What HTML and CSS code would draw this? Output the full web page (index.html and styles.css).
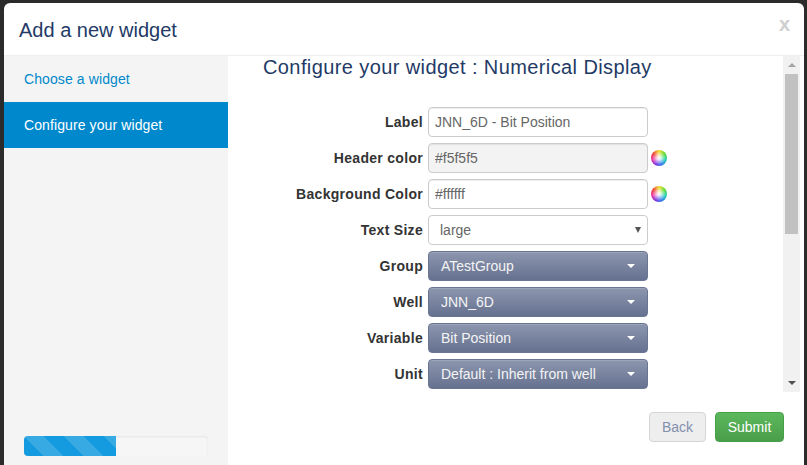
FILE: index.html
```html
<!DOCTYPE html>
<html lang="en">
<head>
<meta charset="utf-8">
<title>Add a new widget</title>
<link rel="stylesheet" href="styles.css">
</head>
<body>
<div class="modal">
  <header class="modal-header">
    <h3>Add a new widget</h3>
    <span class="close">x</span>
  </header>
  <div class="modal-body">
    <aside class="sidebar">
      <nav class="steps">
        <a class="step">Choose a widget</a>
        <a class="step active">Configure your widget</a>
      </nav>
      <div class="progress"><div class="bar"></div></div>
    </aside>
    <main class="content">
      <div class="scroll-row">
        <div class="scroll-pane">
          <h4>Configure your widget : Numerical Display</h4>
          <form class="form">
            <div class="row"><label>Label</label><input class="field" type="text" value="JNN_6D - Bit Position"></div>
            <div class="row"><label>Header color</label><input class="field tinted" type="text" value="#f5f5f5"><span class="wheel"></span></div>
            <div class="row"><label>Background Color</label><input class="field" type="text" value="#ffffff"><span class="wheel"></span></div>
            <div class="row"><label>Text Size</label><div class="field select"><span>large</span><i class="select-arrow"></i></div></div>
            <div class="row"><label>Group</label><div class="dropdown"><span>ATestGroup</span><i class="caret"></i></div></div>
            <div class="row"><label>Well</label><div class="dropdown"><span>JNN_6D</span><i class="caret"></i></div></div>
            <div class="row"><label>Variable</label><div class="dropdown"><span>Bit Position</span><i class="caret"></i></div></div>
            <div class="row"><label>Unit</label><div class="dropdown"><span>Default : Inherit from well</span><i class="caret"></i></div></div>
          </form>
        </div>
        <div class="scrollbar">
          <i class="arrow-up"></i>
          <div class="track"><div class="thumb"></div></div>
          <i class="arrow-down"></i>
        </div>
      </div>
      <footer class="actions">
        <button class="btn back" type="button">Back</button>
        <button class="btn submit" type="button">Submit</button>
      </footer>
    </main>
  </div>
</div>
</body>
</html>
```
FILE: styles.css
```css
* { box-sizing: border-box; }
html, body { margin: 0; height: 100%; overflow: hidden; }
body {
  background: #2b2b2b;
  padding: 3px 3px 0 4px;
  font-family: "Liberation Sans", Arial, sans-serif;
  font-size: 14px;
  color: #333;
}
.modal {
  height: 462px;
  background: #fff;
  border-radius: 6px 6px 0 0;
  display: flex;
  flex-direction: column;
  overflow: hidden;
}
.modal-header {
  height: 53px;
  flex: none;
  border-bottom: 1px solid #eee;
  padding: 2px 15px 0;
  display: flex;
  justify-content: space-between;
  align-items: center;
}
.modal-header h3 {
  margin: 0;
  font-size: 20px;
  font-weight: 400;
  color: #233a66;
}
.close {
  font-size: 20px;
  font-weight: 700;
  color: #cfcfcf;
  line-height: 1;
  margin-top: -12px;
  margin-right: -1px;
}
.modal-body { flex: 1; display: flex; min-height: 0; }
.sidebar {
  width: 224px;
  flex: none;
  background: #f4f4f4;
  display: flex;
  flex-direction: column;
  justify-content: space-between;
  padding-bottom: 9px;
}
.steps { display: flex; flex-direction: column; }
.step {
  height: 46px;
  line-height: 46px;
  padding-left: 20px;
  color: #0088cc;
  letter-spacing: 0.1px;
}
.step.active { background: #0088cc; color: #fff; }
.progress {
  margin: 0 20px;
  height: 20px;
  background: #f6f6f6;
  border-radius: 4px;
  box-shadow: inset 0 1px 2px rgba(0,0,0,.08);
  overflow: hidden;
}
.bar {
  width: 50%;
  height: 100%;
  background-color: #149bdf;
  background-image: linear-gradient(45deg,
    rgba(255,255,255,.15) 25%, transparent 25%, transparent 50%,
    rgba(255,255,255,.15) 50%, rgba(255,255,255,.15) 75%, transparent 75%);
  background-size: 40px 40px;
}
.content { flex: 1; min-width: 0; display: flex; flex-direction: column; }
.scroll-row { height: 336px; flex: none; display: flex; padding-right: 4px; }
.scroll-pane { flex: 1; min-width: 0; overflow: hidden; }
.scroll-pane h4 {
  margin: 0 0 29px 35px;
  font-size: 20px;
  line-height: 22px;
  font-weight: 400;
  letter-spacing: 0.4px;
  color: #233a66;
}
.form { display: flex; flex-direction: column; gap: 6px; }
.row { display: flex; align-items: center; height: 30px; }
.row label {
  width: 195px;
  flex: none;
  text-align: right;
  font-weight: 700;
  font-size: 14px;
  margin-right: 5px;
  letter-spacing: 0.3px;
}
.field {
  width: 220px;
  height: 30px;
  flex: none;
  border: 1px solid #ccc;
  border-radius: 4px;
  background: #fff;
  padding: 0 6px;
  font: 14px "Liberation Sans", Arial, sans-serif;
  color: #666;
  box-shadow: inset 0 1px 1px rgba(0,0,0,.075);
}
.field.tinted { background: #f3f3f3; }
.select {
  display: flex;
  align-items: center;
  justify-content: space-between;
  padding: 0 6px 0 11px;
  box-shadow: none;
}
.select-arrow {
  width: 0; height: 0;
  border-left: 3px solid transparent;
  border-right: 3px solid transparent;
  border-top: 6px solid #555;
}
.wheel {
  width: 16px;
  height: 16px;
  margin-left: 3px;
  border-radius: 50%;
  background:
    radial-gradient(circle, #fff 0, rgba(255,255,255,.8) 18%, rgba(255,255,255,0) 62%),
    conic-gradient(#f2dc30, #5fdc2c, #1fd0b0, #2a7ff0, #7a35e6, #ec34a4, #ee3f30, #f2dc30);
}
.dropdown {
  width: 220px;
  height: 30px;
  flex: none;
  border: 1px solid #6a7591;
  border-radius: 4px;
  background: linear-gradient(#8c96ae, #667190);
  color: #f4f4f4;
  display: flex;
  align-items: center;
  justify-content: space-between;
  padding: 0 12px 0 12px;
  box-shadow: inset 0 1px 0 rgba(255,255,255,.15);
}
.caret {
  width: 0; height: 0;
  border-left: 4px solid transparent;
  border-right: 4px solid transparent;
  border-top: 4px solid #fff;
}
.scrollbar {
  width: 17px;
  flex: none;
  background: #f1f1f1;
  display: flex;
  flex-direction: column;
  align-items: center;
}
.arrow-up, .arrow-down { width: 0; height: 0; flex: none; border-left: 4px solid transparent; border-right: 4px solid transparent; }
.arrow-up { border-bottom: 4px solid #a3a3a3; margin: 7px 0; }
.arrow-down { border-top: 4px solid #505050; margin: 6px 0 7px; }
.track { flex: 1; width: 100%; }
.thumb { width: 13px; height: 160px; margin: 0 auto; background: #c1c1c1; }
.actions {
  flex: 1;
  display: flex;
  justify-content: flex-end;
  align-items: flex-start;
  gap: 9px;
  padding: 20px 20px 0 0;
}
.btn {
  height: 30px;
  border-radius: 4px;
  font: 14px "Liberation Sans", Arial, sans-serif;
  padding: 0;
}
.back {
  width: 57px;
  background: #eee;
  border: 1px solid #d5d5d5;
  color: #8490ad;
}
.submit {
  width: 69px;
  background: linear-gradient(#5cb85c, #4a9e4a);
  border: 1px solid #46a046;
  color: #fff;
}
```
